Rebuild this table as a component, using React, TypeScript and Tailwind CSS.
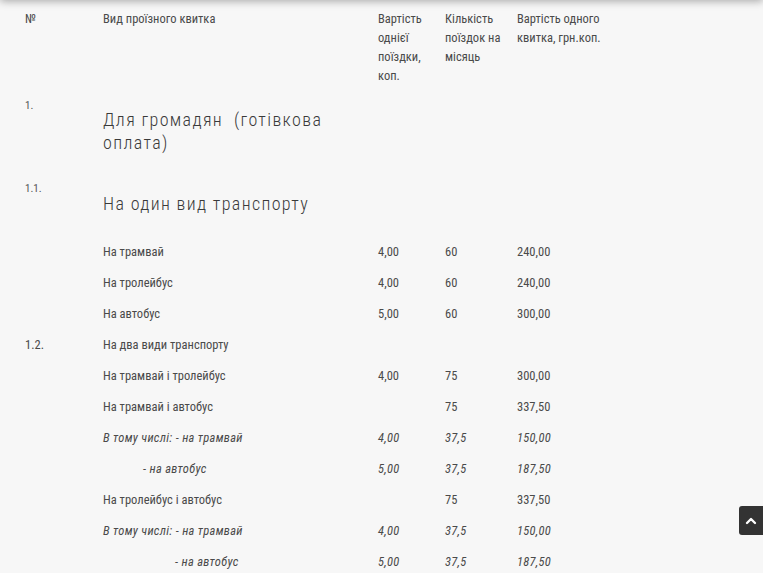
import { ChevronUp } from 'lucide-react'

type Row = {
  num?: string
  name: string
  cost?: string
  count?: string
  total?: string
  italic?: boolean
  indent?: string
}

const rows: Row[] = [
  { name: 'На трамвай', cost: '4,00', count: '60', total: '240,00' },
  { name: 'На тролейбус', cost: '4,00', count: '60', total: '240,00' },
  { name: 'На автобус', cost: '5,00', count: '60', total: '300,00' },
  { num: '1.2.', name: 'На два види транспорту' },
  { name: 'На трамвай і тролейбус', cost: '4,00', count: '75', total: '300,00' },
  { name: 'На трамвай і автобус', count: '75', total: '337,50' },
  { name: 'В тому числі: - на трамвай', cost: '4,00', count: '37,5', total: '150,00', italic: true },
  { name: '- на автобус', cost: '5,00', count: '37,5', total: '187,50', italic: true, indent: 'pl-[40px]' },
  { name: 'На тролейбус і автобус', count: '75', total: '337,50' },
  { name: 'В тому числі: - на трамвай', cost: '4,00', count: '37,5', total: '150,00', italic: true },
  { name: '- на автобус', cost: '5,00', count: '37,5', total: '187,50', italic: true, indent: 'pl-[72px]' },
]

export default function App() {
  return (
    <div
      className="min-h-[573px] bg-[#f7f7f7] text-[#4a4a4a] text-[12.5px] overflow-hidden"
      style={{ fontFamily: '"Roboto Condensed", "Liberation Sans Narrow", Roboto, sans-serif' }}
    >
      {/* header shadow from the fixed bar above */}
      <div className="fixed left-0 right-0 top-[-10px] h-[10px] shadow-[0_1px_8px_rgba(0,0,0,0.35)]" />

      {/* Table header */}
      <div className="flex pt-[9px] leading-[19px]">
        <div className="w-[103px] pl-[25px]">№</div>
        <div className="w-[275px]">Вид проїзного квитка</div>
        <div className="w-[67px]">Вартість<br />однієї<br />поїздки,<br />коп.</div>
        <div className="w-[72px]">Кількість<br />поїздок на<br />місяць</div>
        <div className="w-[100px]">Вартість одного<br />квитка, грн.коп.</div>
      </div>

      {/* 1. */}
      <div className="flex h-[83px]">
        <div className="w-[103px] pl-[25px] pt-[14px] text-[11px] leading-[14px] text-[#555]">1.</div>
        <div className="pt-[23px] text-[18px] font-light leading-[23px] tracking-[1.35px] text-[#3a3a3a]">
          Для громадян&nbsp; (готівкова<br />оплата)
        </div>
      </div>

      {/* 1.1. */}
      <div className="flex h-[68.5px]">
        <div className="w-[103px] pl-[25px] pt-[14px] text-[11px] leading-[14px] text-[#555]">1.1.</div>
        <div className="pt-[23.5px] text-[18px] font-light leading-[23px] tracking-[1.35px] text-[#3a3a3a]">
          На один вид транспорту
        </div>
      </div>

      {rows.map((r, i) => (
        <div key={i} className={`flex h-[31px] items-center ${r.italic ? 'italic tracking-[0.3px]' : ''}`}>
          <div className="w-[103px] pl-[25px]">{r.num}</div>
          <div className={`w-[275px] ${r.indent ?? ''}`}>{r.name}</div>
          <div className="w-[67px]">{r.cost}</div>
          <div className="w-[72px]">{r.count}</div>
          <div className="w-[100px]">{r.total}</div>
        </div>
      ))}

      {/* back to top */}
      <div className="fixed right-0 top-[506px] flex h-[29px] w-[24px] items-center justify-center rounded-l-[3px] bg-[#333]">
        <ChevronUp className="h-4 w-4 text-white" strokeWidth={3.5} />
      </div>
    </div>
  )
}
